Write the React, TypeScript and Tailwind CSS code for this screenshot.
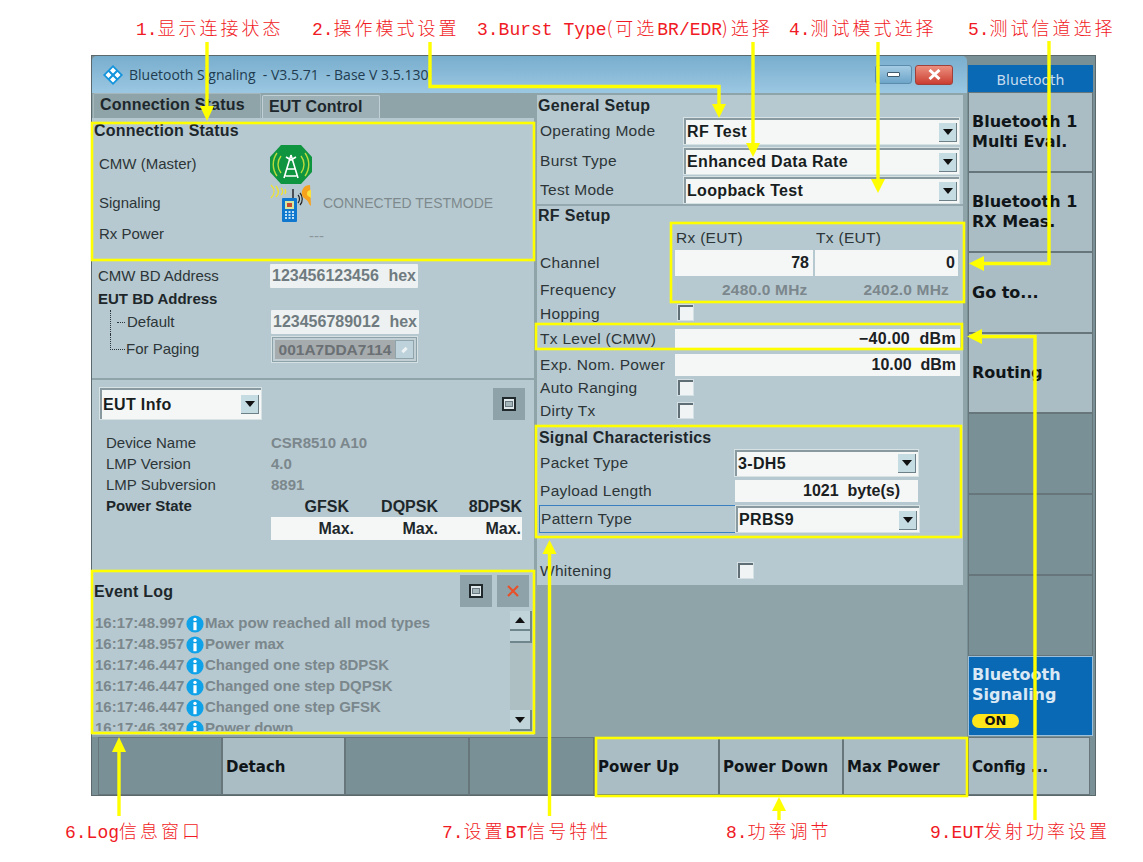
import React from "react";

const sans = "font-['Liberation_Sans',Arial,sans-serif]";
const dv = "font-['DejaVu_Sans',Verdana,sans-serif]";

function Ann({ className = "", parts }: { className?: string; parts: string[] }) {
  return (
    <div className={`${className} whitespace-nowrap text-[18px] leading-[24px] text-[#f01a24] font-['Liberation_Mono','Noto_Sans_CJK_SC',monospace]`}>
      {parts.map((p, i) =>
        i % 2 === 0 ? (
          <span key={i}>{p}</span>
        ) : (
          <span key={i} className="text-[18px] tracking-[3px] font-['Noto_Sans_CJK_SC',sans-serif] font-light">
            {p}
          </span>
        )
      )}
    </div>
  );
}

function Caret() {
  return (
    <span className="flex h-[19px] w-[18px] shrink-0 items-center justify-center border-r border-b border-[#6d8087] bg-[#c6dce3]">
      <svg width="10" height="6" viewBox="0 0 10 6"><path d="M0 0H10L5 6Z" fill="#111" /></svg>
    </span>
  );
}

function Drop({ text, className = "" }: { text: string; className?: string }) {
  return (
    <div className={`${className} flex items-center justify-between border-t-2 border-l-2 border-[#88999f] bg-[#f5f7f7] pl-[1px] pr-[2px] text-[16px] font-bold text-[#171d20] outline outline-1 outline-[#d7e2e5]`}>
      <span className="tracking-[0.35px]">{text}</span>
      <Caret />
    </div>
  );
}

function Check({ className = "" }: { className?: string }) {
  return <span className={`${className} block h-[15px] w-[15px] border-t-2 border-l-2 border-[#5f6f75] bg-[#f1f4f4] outline outline-1 outline-[#d4e0e3]`} />;
}

function Row({ h, label, children, className = "" }: { h: string; label: string; children?: React.ReactNode; className?: string }) {
  return (
    <div className={`${h} ${className} flex items-center`}>
      <span className="w-[138px] shrink-0 pl-[3px] text-[#2c3538] whitespace-nowrap tracking-[0.3px]">{label}</span>
      {children}
    </div>
  );
}

function Field({ className = "", children }: { className?: string; children: React.ReactNode }) {
  return <div className={`${className} flex items-center justify-end bg-[#f5f7f7] pr-[3px] text-[16px] font-bold text-[#1b2023]`}>{children}</div>;
}

function SquareBtn({ className = "" }: { className?: string }) {
  return (
    <div className={`${className} flex h-[32px] w-[32px] items-center justify-center bg-[#8ea3a9]`}>
      <span className="flex h-[14px] w-[14px] items-center justify-center border-2 border-[#20292c] bg-[#dfe8ea]">
        <span className="block h-[6px] w-[8px] border border-[#6a7a80] bg-[#a5b6bb]" />
      </span>
    </div>
  );
}

function Info() {
  return (
    <svg width="18" height="18" viewBox="0 0 18 18" className="mx-[1px] shrink-0">
      <circle cx="9" cy="9" r="8.6" fill="#0fa2e8" />
      <circle cx="9" cy="4.4" r="1.7" fill="#fff" />
      <rect x="7.4" y="7.2" width="3.2" height="8" fill="#fff" />
    </svg>
  );
}

function Log({ t, m }: { t: string; m: string }) {
  return (
    <div className="flex h-[21px] shrink-0 items-center pl-[3px] text-[15px] font-bold text-[#7a878c]">
      <span className="w-[90px] shrink-0 whitespace-nowrap">{t}</span>
      <Info />
      <span className="whitespace-nowrap">{m}</span>
    </div>
  );
}

function Key({ lines, className = "", dark = false, side = false }: { lines?: string[]; className?: string; dark?: boolean; side?: boolean }) {
  return (
    <div className={`${className} ${dark ? "bg-[#7a9097]" : "bg-[#abbdc4]"} ${side ? "text-[16px]" : "text-[15px] pt-[1px]"} flex flex-col justify-center border-[1.5px] border-[#66767b] pl-[3px] leading-[20px] font-bold text-[#0f1518] ${dv}`}>
      {lines?.map((l) => <span key={l} className="whitespace-nowrap">{l}</span>)}
    </div>
  );
}

function Octagon() {
  return (
    <svg width="42" height="39" viewBox="0 0 42 39" className="block">
      <path d="M11 0H31L42 12V27L31 39H11L0 27V12Z" fill="#0f9540" />
      <g fill="none" stroke="#b8dc3c" strokeWidth="1.4">
        <path d="M11 11C7 16 7 23 11 28M7 8C2 15 2 24 7 31M31 11C35 16 35 23 31 28M35 8C40 15 40 24 35 31" />
      </g>
      <g fill="none" stroke="#fff" strokeWidth="1.6">
        <path d="M21 10L14 33M21 10L28 33M17 24H25M15.5 31H26.5M16 12L21 15L26 12" />
      </g>
    </svg>
  );
}

function Phone() {
  return (
    <svg width="44" height="38" viewBox="0 0 44 38" className="block">
      <g fill="none" stroke="#efe233" strokeWidth="1.4">
        <path d="M1 1C5 5 5 10 1 14M6 2C9 6 9 10 6 13M11 4C13 6 13 9 11 11M15 5C16 7 16 8 15 10" />
      </g>
      <rect x="22" y="5" width="2" height="9" fill="#4a4f55" />
      <path d="M28 11C30 13 30 17 28 19M30 9C33 12 33 18 30 21" fill="none" stroke="#222" strokeWidth="1.2" />
      <path d="M40 1C34 1 31 6 32 11C33 15 38 15 39 20L41 22Z" fill="#f6a21c" />
      <path d="M41 6C37 6 36 10 38 12L41 14Z" fill="#fbe23a" />
      <rect x="12" y="14" width="15" height="24" rx="1" fill="#0f77cd" />
      <rect x="15" y="17" width="9" height="8" fill="#d7e6a0" />
      <rect x="17" y="19" width="5" height="4" fill="#c94c2e" />
      <g fill="#bfe0f5">
        <rect x="15" y="27" width="2" height="2" /><rect x="18.5" y="27" width="2" height="2" /><rect x="22" y="27" width="2" height="2" />
        <rect x="15" y="30" width="2" height="2" /><rect x="18.5" y="30" width="2" height="2" /><rect x="22" y="30" width="2" height="2" />
        <rect x="15" y="33" width="2" height="2" /><rect x="18.5" y="33" width="2" height="2" /><rect x="22" y="33" width="2" height="2" />
      </g>
    </svg>
  );
}

function Overlay() {
  const Y = "#ffff00";
  const boxes = [
    [92, 123, 442, 137],
    [671, 223, 293, 79],
    [536, 324, 426, 25],
    [536, 426, 425, 111],
    [92, 571, 442, 162],
    [596, 738, 371, 58],
  ];
  const lines = [
    "M207 42V108",
    "M430 42V86.5H719V106",
    "M753 42V145",
    "M878 42V181",
    "M1049 41V263.5H980",
    "M1035 820V336.5H978",
    "M119 816V750",
    "M779 820V809",
    "M549.5 816V552",
  ];
  const heads = [
    "M200 106H214L207 121Z",
    "M712 104H726L719 118Z",
    "M746 143H760L753 157Z",
    "M871 179H885L878 193Z",
    "M984 256V271L969 263.5Z",
    "M982 329V344L967 336.5Z",
    "M112 752H126L119 737Z",
    "M772 811H786L779 797Z",
    "M542.5 554H556.5L549.5 540Z",
  ];
  return (
    <svg width="1143" height="862" viewBox="0 0 1143 862" className="pointer-events-none absolute top-0 left-0">
      {boxes.map(([x, y, w, h]) => (
        <rect key={`${x}-${y}`} x={x} y={y} width={w} height={h} fill="none" stroke={Y} strokeWidth="2.6" />
      ))}
      {lines.map((d) => <path key={d} d={d} fill="none" stroke={Y} strokeWidth="3.4" />)}
      {heads.map((d) => <path key={d} d={d} fill={Y} />)}
    </svg>
  );
}

export default function App() {
  return (
    <div className={`relative h-[862px] w-[1143px] overflow-hidden bg-white ${sans}`}>
      <div className="flex h-[55px] items-start pt-[15px] pl-[136px]">
        <Ann className="w-[176px]" parts={["1.", "显示连接状态"]} />
        <Ann className="w-[165px]" parts={["2.", "操作模式设置"]} />
        <Ann className="w-[312px]" parts={["3.Burst Type", "(可选", "BR/EDR", ")选择"]} />
        <Ann className="w-[179px]" parts={["4.", "测试模式选择"]} />
        <Ann parts={["5.", "测试信道选择"]} />
      </div>

      <div className="ml-[91px] flex h-[741px] w-[1005px] flex-col border-[1.5px] border-[#5b686c] bg-[#7a9097]">
        <div className="flex h-[681px]">
          {/* window */}
          <div className="flex w-[875px] flex-col overflow-hidden rounded-t-[5px] bg-[#8ea4a9]">
            <div className="flex h-[37px] shrink-0 items-center justify-between bg-gradient-to-b from-[#78aecd] to-[#9bc7e2] pl-[11px] pr-[14px]">
              <div className="flex items-center">
                <svg width="20" height="20" viewBox="0 0 20 20" className="block">
                  <path d="M10 0L20 10L10 20L0 10Z" fill="#1494dc" />
                  <path d="M10 2.5L13 5.5L10 8.5L7 5.5ZM14.5 7L17.5 10L14.5 13L11.5 10ZM5.5 7L8.5 10L5.5 13L2.5 10ZM10 11.5L13 14.5L10 17.5L7 14.5Z" fill="#fff" />
                </svg>
                <span className="ml-[6px] whitespace-nowrap text-[14px] text-[#1f3c50] font-['Open_Sans',sans-serif]">
                  Bluetooth Signaling&nbsp; - V3.5.71&nbsp; - Base V 3.5.130
                </span>
              </div>
              <div className="flex items-center gap-[3px]">
                <span className="flex h-[19px] w-[37px] items-center justify-center rounded-[3px] border border-[#5c8cab] bg-gradient-to-b from-[#a5cce4] to-[#6da5c9]">
                  <span className="block h-[5px] w-[13px] rounded-[1px] border border-[#3f5a6c] bg-white" />
                </span>
                <span className="flex h-[20px] w-[38px] items-center justify-center rounded-[3px] border border-[#a0403a] bg-gradient-to-b from-[#ec8f7f] to-[#c93a30]">
                  <svg width="13" height="11" viewBox="0 0 13 11"><path d="M1.5 1L11.5 10M11.5 1L1.5 10" stroke="#fff" strokeWidth="3" /></svg>
                </span>
              </div>
            </div>

            <div className="flex flex-1">
              {/* left column */}
              <div className="flex w-[443px] shrink-0 flex-col">
                <div className="flex h-[25px] items-end pl-[1px] text-[16px] font-bold text-[#1d272b]">
                  <span className="flex h-[25px] w-[168px] items-center rounded-t-[2px] border border-b-0 border-[#a6b7bc] bg-[#8ea4a9] pb-[2px] pl-[6px] tracking-[0.2px]">Connection Status</span>
                  <span className="ml-[1px] flex h-[23px] w-[118px] items-center rounded-t-[2px] border border-b-0 border-[#c0d0d5] bg-[#9cb0b6] pb-[1px] pl-[6px]">EUT Control</span>
                </div>

                <div className="h-[260px] w-[442px] bg-[#b7c9d0] text-[15px] text-[#2c3538]">
                  <div className="pl-[2px] pt-[4px] text-[16px] leading-[18px] font-bold tracking-[0.2px] text-[#1d272b]">Connection Status</div>
                  <div className="mt-[5px] flex h-[38px] items-center pl-[7px]">
                    <span className="w-[171px]">CMW (Master)</span>
                    <Octagon />
                  </div>
                  <div className="mt-[1px] flex h-[38px] items-center pl-[7px]">
                    <span className="w-[171px]">Signaling</span>
                    <Phone />
                    <span className="ml-[9px] whitespace-nowrap text-[14px] text-[#7d898d]">CONNECTED TESTMODE</span>
                  </div>
                  <div className="mt-[1px] flex h-[22px] items-center pl-[7px]">
                    <span className="w-[210px]">Rx Power</span>
                    <span className="mt-[5px] text-[#8a969a]">---</span>
                  </div>
                  <div className="mt-[19px] flex h-[24px] items-center pl-[6px]">
                    <span className="w-[172px]">CMW BD Address</span>
                    <div className="flex h-[24px] w-[148px] items-center justify-between rounded-[1px] bg-[#eef1f1] px-[2px] text-[16px] font-bold text-[#6f7b80]">
                      <span>123456123456</span><span>hex</span>
                    </div>
                  </div>
                  <div className="flex h-[22px] items-center pl-[6px] font-bold text-[#1d272b]">EUT BD Address</div>
                  <div className="flex h-[24px] items-center">
                    <span className="ml-[18px] h-[24px] w-[7px] border-l border-dotted border-[#2c3538]" />
                    <span className="mr-[1px] h-0 w-[8px] border-t border-dotted border-[#2c3538]" />
                    <span className="w-[145px] pl-[1px]">Default</span>
                    <div className="flex h-[24px] w-[148px] items-center justify-between rounded-[1px] bg-[#eef1f1] px-[2px] text-[16px] font-bold text-[#6f7b80]">
                      <span>123456789012</span><span>hex</span>
                    </div>
                  </div>
                  <div className="mt-[3px] flex h-[25px] items-center">
                    <span className="ml-[18px] mt-[-3px] h-[16px] w-[15px] self-start border-l border-b border-dotted border-[#2c3538]" />
                    <span className="w-[147px] pl-[1px] whitespace-nowrap">For Paging</span>
                    <div className="flex h-[25px] w-[145px] items-center border border-[#8ea3a9] bg-[#c2d0d5] p-[2px] outline outline-1 outline-[#d6e1e4]">
                      <span className="flex h-full w-[120px] items-center justify-center bg-[#a6abad] text-[15.5px] font-bold text-[#6a7074]">001A7DDA7114</span>
                      <span className="flex h-full flex-1 items-center justify-center border border-[#90a5ab] bg-[#bdd2da]">
                        <span className="block h-[6px] w-[3px] rotate-45 bg-[#eef3f5]" />
                      </span>
                    </div>
                  </div>
                </div>

                <div className="mt-[2px] h-[190px] w-[442px] bg-[#b7c9d0] pt-[8px] pl-[8px] pr-[9px] text-[15px] text-[#2c3538]">
                  <div className="flex items-start justify-between">
                    <Drop text="EUT Info" className="h-[31px] w-[161px]" />
                    <SquareBtn />
                  </div>
                  <div className="mt-[13px] pl-[6px]">
                    <div className="flex h-[21px] items-center"><span className="w-[165px]">Device Name</span><span className="font-bold text-[#7b878c]">CSR8510 A10</span></div>
                    <div className="flex h-[21px] items-center"><span className="w-[165px]">LMP Version</span><span className="font-bold text-[#7b878c]">4.0</span></div>
                    <div className="flex h-[21px] items-center"><span className="w-[165px]">LMP Subversion</span><span className="font-bold text-[#7b878c]">8891</span></div>
                    <div className="flex h-[21px] items-center font-bold text-[#1d272b]">
                      <span className="w-[165px]">Power State</span>
                      <div className="flex w-[251px] text-[16px]">
                        <span className="w-[78px] text-right">GFSK</span>
                        <span className="w-[89px] text-right">DQPSK</span>
                        <span className="w-[84px] text-right">8DPSK</span>
                      </div>
                    </div>
                    <div className="ml-[165px] flex h-[23px] w-[251px] items-center bg-[#f5f7f7] text-[16px] font-bold text-[#1d272b]">
                      <span className="w-[83px] text-right">Max.</span>
                      <span className="w-[84px] text-right">Max.</span>
                      <span className="w-[83px] text-right">Max.</span>
                    </div>
                  </div>
                </div>

                <div className="mt-[1px] flex h-[164px] w-[442px] flex-col bg-[#b7c9d0]">
                  <div className="flex h-[36px] shrink-0 items-center justify-between pt-[4px] pr-[5px] pl-[2px]">
                    <span className="mt-[1px] text-[16px] font-bold tracking-[0.2px] text-[#1d272b]">Event Log</span>
                    <div className="flex gap-[5px]">
                      <SquareBtn />
                      <div className="flex h-[32px] w-[32px] items-center justify-center bg-[#8ea3a9]">
                        <svg width="12" height="12" viewBox="0 0 12 12"><path d="M1 1L11 11M11 1L1 11" stroke="#e8502a" strokeWidth="2.2" /></svg>
                      </div>
                    </div>
                  </div>
                  <div className="flex min-h-0 flex-1 pb-[4px]">
                    <div className="flex min-w-0 flex-1 flex-col overflow-hidden pt-[6px]">
                      <Log t="16:17:48.997" m="Max pow reached all mod types" />
                      <Log t="16:17:48.957" m="Power max" />
                      <Log t="16:17:46.447" m="Changed one step 8DPSK" />
                      <Log t="16:17:46.447" m="Changed one step DQPSK" />
                      <Log t="16:17:46.447" m="Changed one step GFSK" />
                      <Log t="16:17:46.397" m="Power down" />
                    </div>
                    <div className="mt-[4px] mr-[2px] flex w-[22px] flex-col bg-[#aebfc4]">
                      <span className="flex h-[20px] items-center justify-center border-b-2 border-r-2 border-[#70868d] bg-[#c0d4da]">
                        <svg width="10" height="6" viewBox="0 0 10 6"><path d="M0 6H10L5 0Z" fill="#111" /></svg>
                      </span>
                      <span className="h-[12px] border-b-2 border-r-2 border-[#70868d] bg-[#bed1d7]" />
                      <span className="flex-1" />
                      <span className="flex h-[21px] items-center justify-center border-b-2 border-r-2 border-[#70868d] bg-[#c0d4da]">
                        <svg width="10" height="6" viewBox="0 0 10 6"><path d="M0 0H10L5 6Z" fill="#111" /></svg>
                      </span>
                    </div>
                  </div>
                </div>
              </div>

              {/* right column */}
              <div className="ml-[2px] mt-[2px] h-[490px] w-[426px] bg-[#b7c9d0] text-[15.5px]">
                <div className="flex h-[20px] items-center pl-[1px] pt-[1px] text-[16px] font-bold tracking-[0.3px] text-[#1d272b]">General Setup</div>
                <div className="h-[1px]" />
                <Row h="h-[30px]" label="Operating Mode"><Drop text="RF Test" className="ml-[9px] h-[26px] w-[275px]" /></Row>
                <Row h="h-[30px]" label="Burst Type"><Drop text="Enhanced Data Rate" className="ml-[9px] h-[26px] w-[275px]" /></Row>
                <Row h="h-[28px]" label="Test Mode"><Drop text="Loopback Test" className="ml-[9px] h-[26px] w-[275px]" /></Row>
                <div className="h-[2px] bg-[#94a9af]" />
                <div className="flex h-[18px] items-center pl-[1px] pt-[1px] text-[16px] font-bold tracking-[0.3px] text-[#1d272b]">RF Setup</div>
                <div className="mt-[4px] flex h-[20px] items-center pl-[139px] text-[#2c3538]">
                  <span className="w-[140px] tracking-[0.3px]">Rx (EUT)</span><span className="tracking-[0.3px]">Tx (EUT)</span>
                </div>
                <Row h="h-[30px]" label="Channel">
                  <div className="flex gap-[2px]">
                    <Field className="h-[26px] w-[138px] !pr-[4px]">78</Field>
                    <Field className="h-[26px] w-[143px]">0</Field>
                  </div>
                </Row>
                <Row h="h-[24px]" label="Frequency">
                  <div className="flex w-[275px] justify-between pr-[1px] pl-[47px] font-bold tracking-[0.2px] text-[#7b878c]">
                    <span>2480.0 MHz</span><span>2402.0 MHz</span>
                  </div>
                </Row>
                <Row h="h-[24px]" label="Hopping"><Check className="ml-[3px] mt-[-3px]" /></Row>
                <Row h="h-[26px]" label="Tx Level (CMW)"><Field className="h-[20px] w-[285px] !pr-[4px] tracking-[0.3px]">−40.00&nbsp; dBm</Field></Row>
                <Row h="h-[26px]" label="Exp. Nom. Power"><Field className="h-[22px] w-[285px] !pr-[4px]">10.00&nbsp; dBm</Field></Row>
                <Row h="h-[20px]" label="Auto Ranging"><Check className="ml-[3px] mt-[-2px]" /></Row>
                <Row h="h-[26px]" label="Dirty Tx"><Check className="ml-[3px] mt-[-2px]" /></Row>
                <div className="mt-[4px] flex h-[20px] items-center pl-[2px] text-[16px] font-bold tracking-[0.2px] text-[#1d272b]">Signal Characteristics</div>
                <Row h="h-[29px]" label="Packet Type" className="!gap-[60px]"><Drop text="3-DH5" className="h-[26px] w-[183px]" /></Row>
                <Row h="h-[28px]" label="Payload Length" className="!gap-[60px]"><Field className="h-[22px] w-[183px] !pr-[18px]">1021&nbsp; byte(s)</Field></Row>
                <div className="ml-[2px] flex h-[28px] w-[381px] items-center border border-[#3a80c0] text-[#2c3538]">
                  <span className="w-[196px] pl-[1px] tracking-[0.3px]">Pattern Type</span>
                  <Drop text="PRBS9" className="h-[26px] w-[183px]" />
                </div>
                <Row h="h-[22px]" label="Whitening" className="mt-[27px] !gap-[63px]"><Check className="mt-[-2px]" /></Row>
              </div>
            </div>
          </div>

          {/* right soft keys */}
          <div className="flex w-[127px] flex-col pl-[1px] pr-[1px]">
            <div className="h-[9px]" />
            <div className={`flex h-[27px] items-center justify-center bg-[#0a69b5] pt-[4px] text-[14px] text-[#c6dcee] ${dv}`}>Bluetooth</div>
            <Key side className="h-[80px]" lines={["Bluetooth 1", "Multi Eval."]} />
            <Key side className="h-[80px]" lines={["Bluetooth 1", "RX Meas."]} />
            <Key side className="h-[81px]" lines={["Go to..."]} />
            <Key side className="h-[80px]" lines={["Routing"]} />
            <Key dark className="h-[81px]" />
            <Key dark className="h-[81px]" />
            <Key dark className="h-[81px]" />
            <div className={`flex h-[80px] flex-col border border-[#9cc0dc] bg-[#0a69b5] pt-[8px] pl-[3px] text-[16px] leading-[20px] font-bold text-[#d9e8f4] ${dv}`}>
              <span>Bluetooth</span>
              <span>Signaling</span>
              <span className="mt-[9px] flex h-[14px] w-[47px] items-center justify-center rounded-full bg-[#ffe61a] text-[13px] text-[#111]">ON</span>
            </div>
          </div>
        </div>

        {/* bottom soft keys */}
        <div className="flex h-[58px] pl-[6px]">
          <Key dark className="w-[124px]" />
          <Key className="w-[123px]" lines={["Detach"]} />
          <Key dark className="w-[124px]" />
          <Key dark className="w-[125px]" />
          <Key className="w-[125px]" lines={["Power Up"]} />
          <Key className="w-[124px]" lines={["Power Down"]} />
          <Key className="w-[124px]" lines={["Max Power"]} />
          <Key className="ml-[1px] w-[122px]" lines={["Config ..."]} />
        </div>
      </div>

      <div className="flex h-[66px] items-start pt-[22px] pl-[65px]">
        <Ann className="w-[377px]" parts={["6.Log", "信息窗口"]} />
        <Ann className="w-[284px]" parts={["7.", "设置", "BT", "信号特性"]} />
        <Ann className="w-[204px]" parts={["8.", "功率调节"]} />
        <Ann parts={["9.EUT", "发射功率设置"]} />
      </div>

      <Overlay />
    </div>
  );
}
